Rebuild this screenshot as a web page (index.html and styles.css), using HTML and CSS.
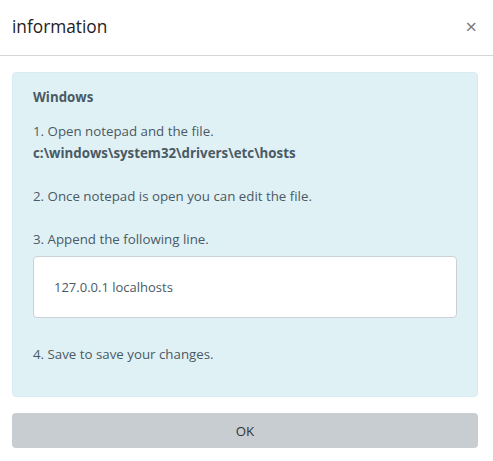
FILE: index.html
```html
<!DOCTYPE html>
<html>
<head>
<meta charset="utf-8">
<link rel="stylesheet" href="styles.css">
</head>
<body>
<div class="modal">
  <div class="header">
    <h1 class="title">information</h1>
    <span class="close">×</span>
  </div>
  <div class="body">
    <div class="alert">
      <p class="heading">Windows</p>
      <p class="step">1. Open notepad and the file.<br><strong>c:\windows\system32\drivers\etc\hosts</strong></p>
      <p class="step">2. Once notepad is open you can edit the file.</p>
      <p class="step before-code">3. Append the following line.</p>
      <div class="codebox">127.0.0.1 localhosts</div>
      <p class="step last">4. Save to save your changes.</p>
    </div>
    <button class="ok">OK</button>
  </div>
</div>
</body>
</html>
```
FILE: styles.css
```css
* { box-sizing: border-box; }
html, body { margin: 0; padding: 0; background: #fff; }
body { font-family: "Open Sans", "Noto Sans", sans-serif; color: #333; }
.modal { width: 493px; }
.header {
  height: 56px;
  border-bottom: 1px solid #d6d6d6;
  display: flex;
  align-items: center;
  justify-content: space-between;
  padding: 0 16px 2px 12px;
}
.title { margin: 0; font-size: 17.3px; font-weight: 400; color: #222; }
.close { font-size: 20px; color: #777; line-height: 1; }
.body { padding: 16px 15px 12px 12px; }
.alert {
  background: #e0f1f6;
  border: 1px solid #d7ecf2;
  border-radius: 4px;
  padding: 13px 20px 31px;
  color: #4a5a64;
  font-size: 13.3px;
  line-height: 22px;
}
.alert p { margin: 0; }
.alert .heading { font-weight: 700; margin-bottom: 12px; }
.alert .step { margin-bottom: 21px; }
.step strong { font-weight: 700; }
.alert .before-code { margin-bottom: 6px; }
.codebox {
  background: #fff;
  border: 1px solid #c9d1d6;
  border-radius: 4px;
  height: 62px;
  padding: 0 20px;
  display: flex;
  align-items: center;
  margin-bottom: 25px;
  font-size: 13px;
}
.alert .last { margin-bottom: 0; }
.ok {
  display: block;
  width: 100%;
  margin-top: 16px;
  height: 35px;
  border: none;
  border-radius: 4px;
  background: #c8cdd1;
  color: #333;
  font-family: inherit;
  font-size: 13.3px;
}
```
